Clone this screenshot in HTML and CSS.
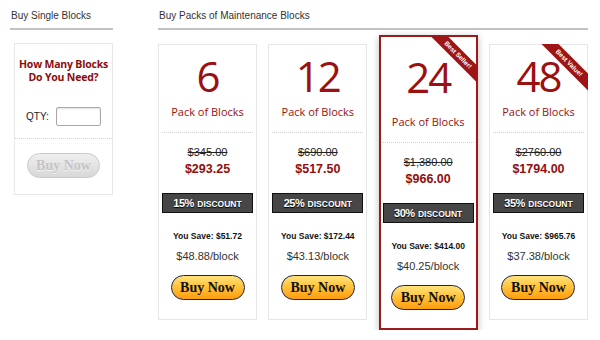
FILE: index.html
```html
<!DOCTYPE html>
<html lang="en">
<head>
  <meta charset="UTF-8">
  <title>Buy Maintenance Blocks</title>
  <meta name="viewport" content="width=device-width, initial-scale=1.0">
  <link rel="stylesheet" href="styles.css">
</head>
<body>
  <div class="shop">
    <!-- single blocks -->
    <div class="col-single">
      <div class="section-title">Buy Single Blocks</div>
      <div class="single-box">
        <div class="single-title">How Many Blocks</div>
        <div class="single-title">Do You Need?</div>
        <div class="qty-row">
          <label class="qty-label" for="qty">QTY:</label>
          <input id="qty" class="qty-input" type="text">
        </div>
        <div class="single-buy">
          <button class="buy-btn disabled" disabled>Buy Now</button>
        </div>
      </div>
    </div>

    <!-- packs -->
    <div class="col-packs">
      <div class="section-title">Buy Packs of Maintenance Blocks</div>
      <div class="packs">
        <div class="card">
          <div class="card-head">
            <div class="num">6</div>
            <div class="pack">Pack of Blocks</div>
          </div>
          <div class="old-price">$345.00</div>
          <div class="new-price">$293.25</div>
          <div class="discount"><span class="pct">15%</span> DISCOUNT</div>
          <div class="save">You Save: $51.72</div>
          <div class="per">$48.88/block</div>
          <button class="buy-btn">Buy Now</button>
        </div>

        <div class="card">
          <div class="card-head">
            <div class="num">12</div>
            <div class="pack">Pack of Blocks</div>
          </div>
          <div class="old-price">$690.00</div>
          <div class="new-price">$517.50</div>
          <div class="discount"><span class="pct">25%</span> DISCOUNT</div>
          <div class="save">You Save: $172.44</div>
          <div class="per">$43.13/block</div>
          <button class="buy-btn">Buy Now</button>
        </div>

        <div class="card featured">
          <div class="ribbon-wrap"><div class="ribbon">Best Seller!</div></div>
          <div class="card-head">
            <div class="num">24</div>
            <div class="pack">Pack of Blocks</div>
          </div>
          <div class="old-price">$1,380.00</div>
          <div class="new-price">$966.00</div>
          <div class="discount"><span class="pct">30%</span> DISCOUNT</div>
          <div class="save">You Save: $414.00</div>
          <div class="per">$40.25/block</div>
          <button class="buy-btn">Buy Now</button>
        </div>

        <div class="card">
          <div class="ribbon-wrap"><div class="ribbon">Best Value!</div></div>
          <div class="card-head">
            <div class="num">48</div>
            <div class="pack">Pack of Blocks</div>
          </div>
          <div class="old-price">$2760.00</div>
          <div class="new-price">$1794.00</div>
          <div class="discount"><span class="pct">35%</span> DISCOUNT</div>
          <div class="save">You Save: $965.76</div>
          <div class="per">$37.38/block</div>
          <button class="buy-btn">Buy Now</button>
        </div>
      </div>
    </div>
  </div>
</body>
</html>
```

FILE: styles.css
```css
body {
  margin: 0;
  background: #fff;
  font-family: 'Liberation Sans', Arial, sans-serif;
  color: #222;
}
.shop {
  display: flex;
  align-items: flex-start;
  padding: 10px 0 0 10px;
}
.col-single {
  width: 103px;
}
.col-packs {
  width: 430px;
  margin-left: 45px;
}
.section-title {
  font-size: 10px;
  line-height: 12px;
  color: #333;
  padding: 0 0 6px 1px;
  border-bottom: 2px solid #c2c2c2;
}

/* single blocks box */
.single-box {
  margin: 13px 0 0 4px;
  border: 1px solid #e8e8e8;
  padding: 14px 0 16px;
  text-align: center;
}
.single-title {
  font-family: 'Open Sans', sans-serif;
  font-weight: 700;
  font-size: 10.5px;
  line-height: 13px;
  color: #8c0c0c;
  letter-spacing: -0.2px;
}
.qty-row {
  margin-top: 23px;
  padding-bottom: 12px;
  border-bottom: 1px dotted #d4d4d4;
  display: flex;
  justify-content: center;
  align-items: center;
  gap: 7px;
}
.qty-label {
  font-size: 10px;
  color: #222;
}
.qty-input {
  width: 45px;
  height: 19px;
  box-sizing: border-box;
  border: 1px solid #a9a9a9;
  border-radius: 2px;
  box-shadow: inset 0 1px 2px rgba(0,0,0,0.12);
  padding: 0 3px;
  margin: 0;
}
.single-buy {
  padding-top: 14px;
}

/* packs */
.packs {
  display: flex;
  justify-content: space-between;
  align-items: flex-start;
  margin-top: 5px;
}
.card {
  position: relative;
  width: 99px;
  box-sizing: border-box;
  margin-top: 9px;
  border: 1px solid #e6e6e6;
  padding: 0 3px 19px;
  text-align: center;
  background: #fff;
}
.card.featured {
  margin-top: 0;
  border: 2px solid #9b1a1a;
  padding: 0 2px 18px;
  box-shadow: 0 2px 7px rgba(0,0,0,0.28);
}
.card-head {
  padding: 10px 0 13px;
  border-bottom: 1px dotted #d2d2d2;
}
.featured .card-head {
  padding-top: 19px;
}
.num {
  font-family: 'Open Sans', sans-serif;
  font-size: 42px;
  line-height: 42px;
  letter-spacing: -2px;
  color: #9b1010;
}
.pack {
  margin-top: 8px;
  font-family: 'Open Sans', sans-serif;
  font-size: 11px;
  line-height: 14px;
  color: #9b1010;
}
.featured .pack {
  margin-top: 17px;
}
.old-price {
  margin-top: 12px;
  font-size: 11px;
  line-height: 14px;
  color: #222;
  text-decoration: line-through;
}
.new-price {
  margin-top: 2px;
  font-size: 12.5px;
  line-height: 16px;
  font-weight: 700;
  color: #930d0d;
}
.discount {
  margin-top: 16px;
  height: 20px;
  box-sizing: border-box;
  background: #464646;
  border: 1px solid #111;
  color: #fff;
  font-weight: 700;
  font-size: 8.5px;
  line-height: 18px;
  text-shadow: 0 1px 1px #000;
}
.discount .pct {
  font-size: 11px;
  letter-spacing: -0.5px;
  margin-right: 1px;
}
.save {
  margin-top: 17px;
  font-size: 8.5px;
  line-height: 12px;
  font-weight: 700;
  color: #111;
}
.per {
  margin-top: 7px;
  font-size: 11px;
  line-height: 14px;
  color: #333;
}

/* buttons */
.buy-btn {
  display: inline-block;
  margin-top: 12px;
  width: 74px;
  height: 25px;
  box-sizing: border-box;
  padding: 0;
  border: 1px solid #1c2550;
  border-radius: 13px;
  background: linear-gradient(to bottom, #ffe37a 0%, #ffc43c 45%, #ff9c10 100%);
  font-family: 'Liberation Serif', 'Times New Roman', serif;
  font-weight: 700;
  font-size: 14px;
  line-height: 23px;
  color: #111;
  cursor: pointer;
}
.buy-btn.disabled {
  margin-top: 0;
  width: 73px;
  border-color: #cacaca;
  background: linear-gradient(to bottom, #efefef 0%, #d8d8d8 100%);
  color: #c4c4c4;
  text-shadow: 0 1px 0 #f4f4f4;
  cursor: default;
}

/* corner ribbons */
.ribbon-wrap {
  position: absolute;
  top: -1px;
  right: -1px;
  width: 58px;
  height: 58px;
  overflow: hidden;
}
.ribbon {
  position: absolute;
  top: 13px;
  right: -16px;
  width: 70px;
  height: 12px;
  line-height: 12px;
  background: #9e1515;
  color: #fff;
  font-size: 6.5px;
  font-weight: 700;
  text-align: center;
  transform: rotate(45deg);
}
```
